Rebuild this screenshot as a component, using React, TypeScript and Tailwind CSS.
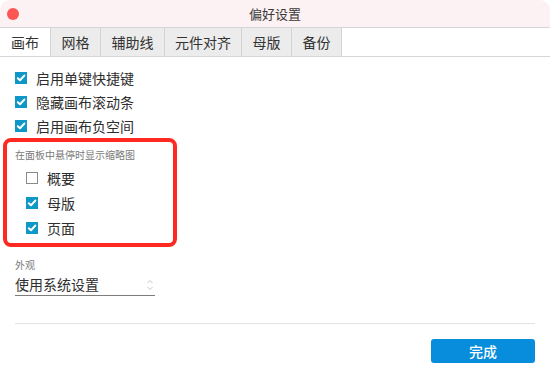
import React from 'react'

const tabs = [
  { label: '画布', w: 'w-[51px]' },
  { label: '网格', w: 'w-[50px]' },
  { label: '辅助线', w: 'w-[64px]' },
  { label: '元件对齐', w: 'w-[77px]' },
  { label: '母版', w: 'w-[50px]' },
  { label: '备份', w: 'w-[50px]' },
]

function Check({ checked }: { checked: boolean }) {
  if (!checked) {
    return <span className="w-[12px] h-[12px] border border-[#8a8a8a] bg-white shrink-0" />
  }
  return (
    <span className="w-[12px] h-[12px] bg-[#0f97c7] shrink-0 flex items-center justify-center">
      <svg width="10" height="10" viewBox="0 0 10 10">
        <path d="M1.8 5.2 L4 7.3 L8.3 2.6" fill="none" stroke="white" strokeWidth="2" strokeLinecap="round" strokeLinejoin="round" />
      </svg>
    </span>
  )
}

function Row({ checked, label, className = '' }: { checked: boolean; label: string; className?: string }) {
  return (
    <div className={`flex items-center gap-[9px] ${className}`}>
      <Check checked={checked} />
      <span className="text-[14px] text-[#2e2e2e] leading-none">{label}</span>
    </div>
  )
}

export default function App() {
  return (
    <div className="w-[550px] h-[378px] bg-white font-['Noto_Sans_CJK_SC',sans-serif]">
      <div className="w-full h-full rounded-[10px] overflow-hidden bg-white flex flex-col">
        {/* Title bar */}
        <div className="h-[28px] bg-[#fdf2f3] border-b border-[#d6d6d6] flex items-center relative shrink-0">
          <span className="absolute left-[7px] top-[8px] w-[12px] h-[12px] rounded-full bg-[#fd5454]" />
          <span className="mx-auto text-[13px] text-[#3a3a3a]">偏好设置</span>
        </div>

        {/* Tabs */}
        <div className="h-[29px] flex border-b border-[#d6d6d6] shrink-0">
          {tabs.map((t, i) => (
            <div
              key={t.label}
              className={`${t.w} h-full flex items-center justify-center text-[14px] text-[#333] border-r border-[#d3d3d3] ${i === 0 ? 'bg-white' : 'bg-[#ececec]'}`}
            >
              {t.label}
            </div>
          ))}
        </div>

        {/* Body */}
        <div className="flex-1 flex flex-col px-[15px] pt-[9px]">
          <Row checked label="启用单键快捷键" className="h-[24px]" />
          <Row checked label="隐藏画布滚动条" className="h-[24px]" />
          <Row checked label="启用画布负空间" className="h-[24px]" />

          <div className="-ml-[12px] w-[174px] h-[109px] border-[4px] border-[#fe2a22] rounded-[8px] pl-[8px] pt-[8px]">
            <div className="text-[10px] text-[#7a7a7a] leading-none">在面板中悬停时显示缩略图</div>
            <div className="pl-[11px] mt-[5px]">
              <Row checked={false} label="概要" className="h-[25px]" />
              <Row checked label="母版" className="h-[25px]" />
              <Row checked label="页面" className="h-[25px]" />
            </div>
          </div>

          <div className="mt-[13px] text-[10px] text-[#7a7a7a] leading-none">外观</div>
          <div className="mt-[4px] w-[140px] h-[22px] border-b border-[#7c7c7c] flex items-center justify-between">
            <span className="text-[14px] text-[#2e2e2e]">使用系统设置</span>
            <svg width="8" height="12" viewBox="0 0 8 12" className="mr-[1px]">
              <path d="M1.5 4 L4 1.5 L6.5 4 M1.5 8 L4 10.5 L6.5 8" fill="none" stroke="#c4c4c4" strokeWidth="1" />
            </svg>
          </div>

          <div className="mt-[27px] h-px bg-[#e2e2e2]" />

          <div className="mt-[15px] flex justify-end">
            <button className="w-[104px] h-[24px] rounded-[3px] bg-[#078ddb] text-white text-[14px] font-medium leading-none flex items-center justify-center">
              完成
            </button>
          </div>
        </div>
      </div>
    </div>
  )
}
